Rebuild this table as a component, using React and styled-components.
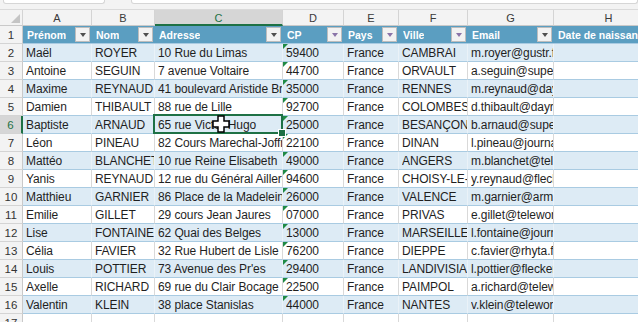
import styled, { createGlobalStyle } from "styled-components";

const COLS = "23px 69px 63px 128px 61px 55px 69px 86px 110px";
const GREEN = "#1e7145";

const GlobalStyle = createGlobalStyle`
  html, body {
    margin: 0;
    padding: 0;
    overflow: hidden;
    background: #ffffff;
  }
  * { box-sizing: border-box; }
`;

const headers = [
  { label: "Prénom", arrow: "#4f4f4f" },
  { label: "Nom", arrow: "#4f4f4f" },
  { label: "Adresse", arrow: "#4f4f4f" },
  { label: "CP", arrow: "#8a74a8" },
  { label: "Pays", arrow: "#8a74a8" },
  { label: "Ville", arrow: "#8a74a8" },
  { label: "Email", arrow: "#4f4f4f" },
  { label: "Date de naissance", arrow: null },
];

const rows = [
  ["Maël", "ROYER", "10 Rue du Limas", "59400", "France", "CAMBRAI", "m.royer@gustr.fr"],
  ["Antoine", "SEGUIN", "7 avenue Voltaire", "44700", "France", "ORVAULT", "a.seguin@superrito.fr"],
  ["Maxime", "REYNAUD", "41 boulevard Aristide Briand", "35000", "France", "RENNES", "m.reynaud@dayrep.fr"],
  ["Damien", "THIBAULT", "88 rue de Lille", "92700", "France", "COLOMBES", "d.thibault@dayrep.fr"],
  ["Baptiste", "ARNAUD", "65 rue Victor Hugo", "25000", "France", "BESANÇON", "b.arnaud@superrito.fr"],
  ["Léon", "PINEAU", "82 Cours Marechal-Joffre", "22100", "France", "DINAN", "l.pineau@journalist.fr"],
  ["Mattéo", "BLANCHET", "10 rue Reine Elisabeth", "49000", "France", "ANGERS", "m.blanchet@teleworm.fr"],
  ["Yanis", "REYNAUD", "12 rue du Général Ailleret", "94600", "France", "CHOISY-LE-ROI", "y.reynaud@fleckens.fr"],
  ["Matthieu", "GARNIER", "86 Place de la Madeleine", "26000", "France", "VALENCE", "m.garnier@armyspy.fr"],
  ["Emilie", "GILLET", "29 cours Jean Jaures", "07000", "France", "PRIVAS", "e.gillet@teleworm.fr"],
  ["Lise", "FONTAINE", "62 Quai des Belges", "13000", "France", "MARSEILLE", "l.fontaine@journalist.fr"],
  ["Célia", "FAVIER", "32 Rue Hubert de Lisle", "76200", "France", "DIEPPE", "c.favier@rhyta.fr"],
  ["Louis", "POTTIER", "73 Avenue des Pr'es", "29400", "France", "LANDIVISIAU", "l.pottier@fleckens.fr"],
  ["Axelle", "RICHARD", "69 rue du Clair Bocage", "22500", "France", "PAIMPOL", "a.richard@teleworm.fr"],
  ["Valentin", "KLEIN", "38 place Stanislas", "44000", "France", "NANTES", "v.klein@teleworm.fr"],
];

const Page = styled.div`
  width: 638px;
  height: 322px;
  overflow: hidden;
  font-family: "Liberation Sans", Arial, sans-serif;
  color: #1f1f1f;
`;

const TopStrip = styled.div`
  height: 10px;
  display: flex;
  gap: 26px;
  padding-left: 3px;
  background: #f3f3f3;
  border-bottom: 1px solid #dadada;
`;

const BarBox = styled.div`
  height: 4px;
  width: ${(p) => p.$w}px;
  background: #ffffff;
  border: 1px solid #d6d6d6;
  border-top: none;
  border-radius: 0 0 3px 3px;
`;

const Sheet = styled.div`
  display: flex;
  flex-direction: column;
`;

const Row = styled.div`
  display: grid;
  grid-template-columns: ${COLS};
  height: ${(p) => p.$h || 18}px;
  flex-shrink: 0;
`;

const Corner = styled.div`
  position: relative;
  background: #f3f3f3;
  border-right: 1px solid #d4d4d4;
  border-bottom: 1px solid #c9c9c9;
  &::after {
    content: "";
    position: absolute;
    right: 2px;
    bottom: 2px;
    border-left: 9px solid transparent;
    border-bottom: 9px solid #c4c4c4;
  }
`;

const ColLetter = styled.div`
  display: flex;
  align-items: center;
  justify-content: center;
  font-size: 11px;
  color: ${(p) => (p.$active ? GREEN : "#3a3a3a")};
  background: ${(p) => (p.$active ? "#d6d6d6" : "#f3f3f3")};
  border-right: 1px solid #d4d4d4;
  border-bottom: ${(p) => (p.$active ? `2px solid ${GREEN}` : "1px solid #c9c9c9")};
  padding-top: ${(p) => (p.$active ? 1 : 0)}px;
`;

const RowNum = styled.div`
  display: flex;
  align-items: center;
  justify-content: center;
  font-size: 11.5px;
  color: ${(p) => (p.$active ? GREEN : "#333333")};
  background: ${(p) => (p.$active ? "#d6d6d6" : "#f3f3f3")};
  border-right: ${(p) => (p.$active ? `2px solid ${GREEN}` : "1px solid #c9c9c9")};
  border-bottom: 1px solid #d4d4d4;
`;

const HeadCell = styled.div`
  display: flex;
  align-items: center;
  justify-content: space-between;
  background: #5b9ec1;
  color: #ffffff;
  font-weight: bold;
  font-size: 10.5px;
  padding-left: 4px;
  border-bottom: 1px solid #a9cbe2;
  overflow: hidden;
  white-space: nowrap;
`;

const HeadLabel = styled.span`
  overflow: hidden;
  flex-shrink: ${(p) => (p.$fit ? 0 : 1)};
`;

const FilterButton = styled.div`
  width: 15px;
  height: 15px;
  margin-right: 2px;
  flex-shrink: 0;
  display: flex;
  align-items: center;
  justify-content: center;
  background: #f2f2f2;
  border: 1px solid #bdbdbd;
  &::after {
    content: "";
    border-left: 3.5px solid transparent;
    border-right: 3.5px solid transparent;
    border-top: 4px solid ${(p) => p.$color};
    margin-top: 1px;
  }
`;

const DataCell = styled.div`
  position: relative;
  display: flex;
  align-items: center;
  padding: 1px 0 0 3px;
  font-size: 12px;
  letter-spacing: -0.1px;
  white-space: nowrap;
  background: ${(p) => (p.$band ? "#ddebf5" : "#ffffff")};
  border-right: 1px solid ${(p) => (p.$band ? "#eaf2f8" : "#d9d9d9")};
  border-bottom: 1px solid #a9cbe2;
`;

const CellText = styled.span`
  display: block;
  width: 100%;
  overflow: hidden;
`;

const TextFlag = styled.span`
  position: absolute;
  left: 0;
  top: 0;
  border-right: 5px solid transparent;
  border-top: 5px solid #1f8a45;
`;

const Selection = styled.div`
  position: absolute;
  left: -2px;
  top: -2px;
  right: -1px;
  bottom: -1px;
  border: 2px solid ${GREEN};
  pointer-events: none;
  z-index: 2;
  &::after {
    content: "";
    position: absolute;
    right: -5px;
    bottom: -5px;
    width: 6px;
    height: 6px;
    background: ${GREEN};
    border: 1px solid #ffffff;
  }
`;

const Cursor = styled.svg`
  position: absolute;
  left: 57px;
  top: -1px;
  z-index: 3;
`;

const EmptyCell = styled.div`
  border-right: 1px solid #d9d9d9;
  background: #ffffff;
`;

const letters = ["A", "B", "C", "D", "E", "F", "G", "H"];

export default function App() {
  return (
    <>
      <GlobalStyle />
      <Page>
        <TopStrip>
          <BarBox $w={104} />
          <BarBox $w={520} />
        </TopStrip>
        <Sheet>
          <Row $h={16}>
            <Corner />
            {letters.map((l) => (
              <ColLetter key={l} $active={l === "C"}>
                {l}
              </ColLetter>
            ))}
          </Row>
          <Row>
            <RowNum>1</RowNum>
            {headers.map((h) => (
              <HeadCell key={h.label}>
                <HeadLabel $fit={!h.arrow}>{h.label}</HeadLabel>
                {h.arrow && <FilterButton $color={h.arrow} />}
              </HeadCell>
            ))}
          </Row>
          {rows.map((r, i) => {
            const n = i + 2;
            const band = n % 2 === 0;
            return (
              <Row key={n}>
                <RowNum $active={n === 6}>{n}</RowNum>
                {r.map((v, c) => (
                  <DataCell key={c} $band={band}>
                    {c === 3 && <TextFlag />}
                    <CellText>{v}</CellText>
                    {n === 6 && c === 2 && (
                      <>
                        <Selection />
                        <Cursor width="18" height="18" viewBox="0 0 18 18">
                          <path
                            d="M6 1h6v5h5v6h-5v5H6v-5H1V6h5z"
                            fill="#ffffff"
                            stroke="#000000"
                            strokeWidth="1.5"
                          />
                        </Cursor>
                      </>
                    )}
                  </DataCell>
                ))}
                <DataCell $band={band} />
              </Row>
            );
          })}
          <Row>
            <RowNum>17</RowNum>
            {letters.map((l) => (
              <EmptyCell key={l} />
            ))}
          </Row>
        </Sheet>
      </Page>
    </>
  );
}
